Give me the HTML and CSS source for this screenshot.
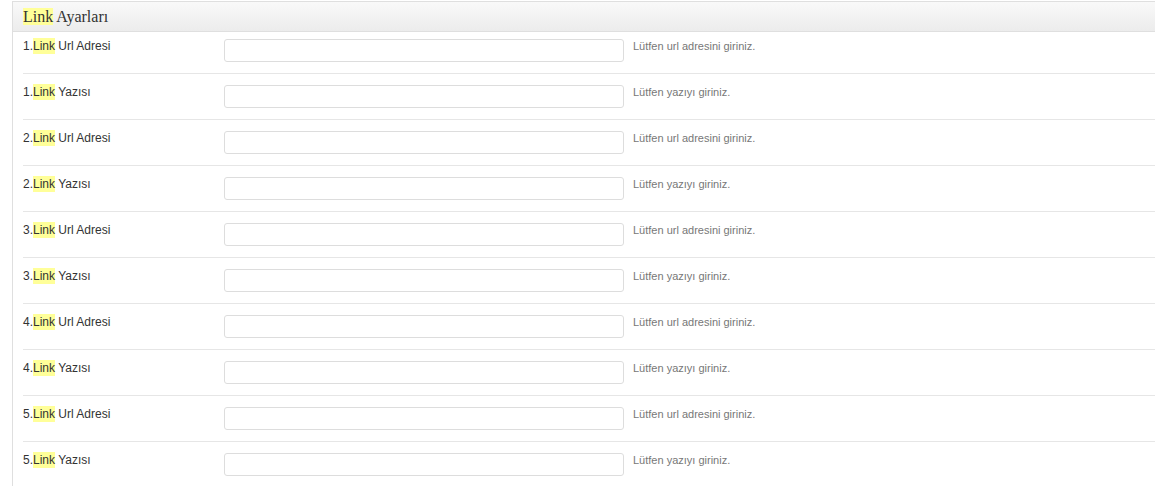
FILE: index.html
```html
<!DOCTYPE html>
<html lang="tr">
<head>
<meta charset="utf-8">
<title>Link Ayarları</title>
<link rel="stylesheet" href="styles.css">
</head>
<body>
<div class="panel">
  <div class="panel-head"><span class="hl">Link</span> Ayarları</div>
  <div class="rows">
    <div class="row first">
      <label class="lbl">1.<span class="hl">Link</span> Url Adresi</label>
      <input class="field" type="text">
      <span class="help">Lütfen url adresini giriniz.</span>
    </div>
    <div class="row">
      <label class="lbl">1.<span class="hl">Link</span> Yazısı</label>
      <input class="field" type="text">
      <span class="help">Lütfen yazıyı giriniz.</span>
    </div>
    <div class="row">
      <label class="lbl">2.<span class="hl">Link</span> Url Adresi</label>
      <input class="field" type="text">
      <span class="help">Lütfen url adresini giriniz.</span>
    </div>
    <div class="row">
      <label class="lbl">2.<span class="hl">Link</span> Yazısı</label>
      <input class="field" type="text">
      <span class="help">Lütfen yazıyı giriniz.</span>
    </div>
    <div class="row">
      <label class="lbl">3.<span class="hl">Link</span> Url Adresi</label>
      <input class="field" type="text">
      <span class="help">Lütfen url adresini giriniz.</span>
    </div>
    <div class="row">
      <label class="lbl">3.<span class="hl">Link</span> Yazısı</label>
      <input class="field" type="text">
      <span class="help">Lütfen yazıyı giriniz.</span>
    </div>
    <div class="row">
      <label class="lbl">4.<span class="hl">Link</span> Url Adresi</label>
      <input class="field" type="text">
      <span class="help">Lütfen url adresini giriniz.</span>
    </div>
    <div class="row">
      <label class="lbl">4.<span class="hl">Link</span> Yazısı</label>
      <input class="field" type="text">
      <span class="help">Lütfen yazıyı giriniz.</span>
    </div>
    <div class="row">
      <label class="lbl">5.<span class="hl">Link</span> Url Adresi</label>
      <input class="field" type="text">
      <span class="help">Lütfen url adresini giriniz.</span>
    </div>
    <div class="row">
      <label class="lbl">5.<span class="hl">Link</span> Yazısı</label>
      <input class="field" type="text">
      <span class="help">Lütfen yazıyı giriniz.</span>
    </div>
  </div>
</div>
</body>
</html>
```
FILE: styles.css
```css
html, body {
  margin: 0;
  padding: 0;
  background: #ffffff;
  overflow: hidden;
}

body {
  font-family: "Liberation Sans", Arial, sans-serif;
  color: #333333;
}

.panel {
  margin: 1px 0 0 12px;
  border: 1px solid #dfdfdf;
  border-right: none;
  background: #ffffff;
}

.panel-head {
  height: 29px;
  line-height: 29px;
  padding-left: 10px;
  border-bottom: 1px solid #dfdfdf;
  background: linear-gradient(to bottom, #f9f9f9, #ececec);
  font-family: "Liberation Serif", "Times New Roman", serif;
  font-size: 16px;
  color: #333333;
}

.hl {
  background: #ffff99;
}

.lbl .hl {
  padding: 1px 0;
}

.rows {
  margin-left: 10px;
}

.row {
  display: flex;
  align-items: flex-start;
  padding: 9px 0 11px 0;
  border-bottom: 1px solid #e6e6e6;
}

.row.first {
  padding-top: 5px;
}

.lbl {
  width: 201px;
  flex: none;
  margin-top: 1px;
  font-size: 12px;
  line-height: 16px;
  color: #333333;
}

.field {
  box-sizing: border-box;
  width: 400px;
  height: 23px;
  margin: 2px 0 0 0;
  padding: 2px 4px;
  border: 1px solid #dddddd;
  border-radius: 3px;
  background: #ffffff;
  flex: none;
  font-size: 12px;
}

.help {
  margin: 1px 0 0 9px;
  font-size: 11px;
  line-height: 16px;
  color: #777777;
}
```
